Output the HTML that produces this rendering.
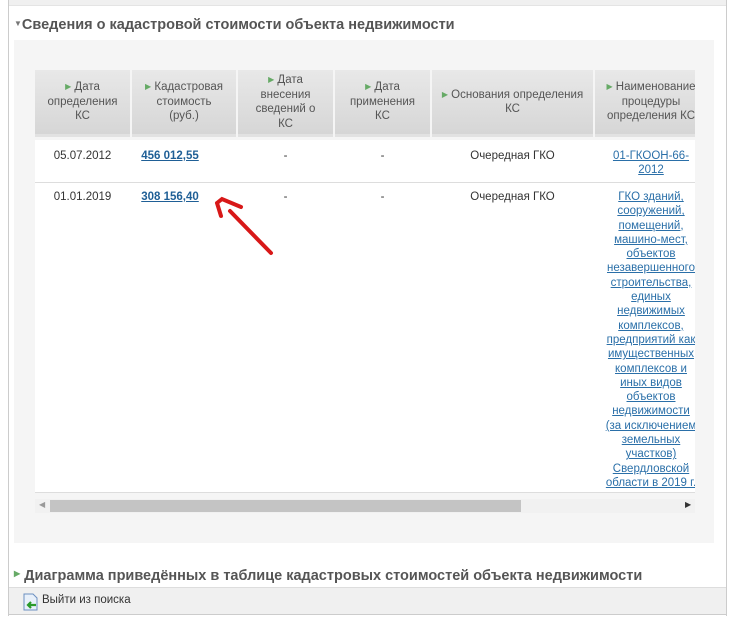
<!DOCTYPE html>
<html><head><meta charset="utf-8"><style>
*{margin:0;padding:0;box-sizing:border-box}
body{width:730px;height:619px;background:#fff;font-family:"Liberation Sans",Arial,sans-serif;position:relative;overflow:hidden;color:#333}
.a{position:absolute}
.frame{left:8px;top:0;width:719px;height:616px;border-left:1px solid #ccc;border-right:1px solid #ccc}
.top{left:9px;top:0;width:717px;height:6px;background:#f0f0f0;border-bottom:1px solid #e4e4e4}
.t1{left:14px;top:17px;font-size:14.5px;font-weight:bold;color:#555;white-space:nowrap}
.panel{left:14px;top:40px;width:700px;height:503px;background:#f5f5f5}
.th{top:70px;height:67px;background:linear-gradient(#e8e8e8,#d6d6d6);border-bottom:3px solid #e2e2e2;font-size:11.5px;color:#555;text-align:center;display:flex;align-items:center;justify-content:center;line-height:14.5px}
.tri{color:#6a6;font-size:8px;vertical-align:1px}
.row{left:35px;width:660px;background:#fff;border-bottom:1px solid #ddd}
.c{font-size:11.5px;color:#333;text-align:center;line-height:14.3px}
.lk{color:#2a6fa8;text-decoration:underline}
.b{font-weight:bold;color:#1f5f96}
</style></head><body>
<div class="a frame"></div>
<div class="a top"></div>
<div class="a t1"><span style="font-size:8px;color:#777;vertical-align:3px">▼</span>Сведения о кадастровой стоимости объекта недвижимости</div>
<div class="a panel"></div>
<div class="a row" style="top:140px;height:43px"></div>
<div class="a row" style="top:183px;height:310px"></div>
<div class="a th" style="left:35px;width:95px"><div><span class="tri">▶</span> Дата<br>определения<br>КС</div></div>
<div class="a th" style="left:132px;width:104px"><div><span class="tri">▶</span> Кадастровая<br>стоимость<br>(руб.)</div></div>
<div class="a th" style="left:238px;width:95px"><div><span class="tri">▶</span> Дата<br>внесения<br>сведений о<br>КС</div></div>
<div class="a th" style="left:335px;width:95px"><div><span class="tri">▶</span> Дата<br>применения<br>КС</div></div>
<div class="a th" style="left:432px;width:161px"><div><span class="tri">▶</span> Основания определения<br>КС</div></div>
<div class="a th" style="left:595px;width:100px;overflow:hidden;white-space:nowrap;justify-content:flex-start"><div style="width:112px;flex:none"><span class="tri">▶</span> Наименование<br>процедуры<br>определения КС</div></div>
<div class="a c" style="left:35px;width:95px;top:149px">05.07.2012</div>
<div class="a c" style="left:132px;width:76px;top:149px"><span class="lk b">456 012,55</span></div>
<div class="a c" style="left:238px;width:95px;top:149px">-</div>
<div class="a c" style="left:335px;width:95px;top:149px">-</div>
<div class="a c" style="left:432px;width:161px;top:149px">Очередная ГКО</div>
<div class="a c" style="left:595px;width:100px;top:149px;overflow:hidden"><div style="width:112px"><span class="lk">01-ГКООН-66-<br>2012</span></div></div>
<div class="a c" style="left:35px;width:95px;top:190px">01.01.2019</div>
<div class="a c" style="left:132px;width:76px;top:190px"><span class="lk b">308 156,40</span></div>
<div class="a c" style="left:238px;width:95px;top:190px">-</div>
<div class="a c" style="left:335px;width:95px;top:190px">-</div>
<div class="a c" style="left:432px;width:161px;top:190px">Очередная ГКО</div>
<div class="a c" style="left:595px;width:100px;top:190px;white-space:nowrap;overflow:hidden"><div style="width:112px"><span class="lk">ГКО зданий,<br>сооружений,<br>помещений,<br>машино-мест,<br>объектов<br>незавершенного<br>строительства,<br>единых<br>недвижимых<br>комплексов,<br>предприятий как<br>имущественных<br>комплексов и<br>иных видов<br>объектов<br>недвижимости<br>(за исключением<br>земельных<br>участков)<br>Свердловской<br>области в 2019 г.</span></div></div>
<svg class="a" style="left:0;top:0" width="730" height="619"><path d="M271 253 L230 211 M217 203 L222 199 L241 207 M217 203 L221 216" stroke="#d81818" stroke-width="4" fill="none" stroke-linecap="round"/></svg>
<div class="a" style="left:35px;top:499px;width:660px;height:14px;background:#f1f1f1"></div>
<div class="a" style="left:50px;top:500px;width:471px;height:12px;background:#c4c4c4"></div>
<div class="a" style="left:39px;top:500px;font-size:8px;color:#999">◀</div>
<div class="a" style="left:685px;top:500px;font-size:8px;color:#333">▶</div>
<div class="a" style="left:14px;top:568px;font-size:14.5px;font-weight:bold;color:#555;white-space:nowrap"><span style="font-size:8px;color:#6a6;vertical-align:4px">▶</span> Диаграмма приведённых в таблице кадастровых стоимостей объекта недвижимости</div>
<div class="a" style="left:9px;top:587px;width:717px;height:28px;background:#f0f0f0;border-top:1px solid #ddd;border-bottom:1px solid #ccc"></div>
<svg class="a" style="left:22px;top:593px" width="18" height="18"><path d="M2 1h9l4 4v12H2z" fill="#e8f0fa" stroke="#6b8fc0"/><path d="M14 12H6m3-3l-3 3 3 3" stroke="#2a9a2a" stroke-width="2.2" fill="none"/></svg>
<div class="a" style="left:42px;top:594px;font-size:11.5px;color:#333">Выйти из поиска</div>
</body></html>
